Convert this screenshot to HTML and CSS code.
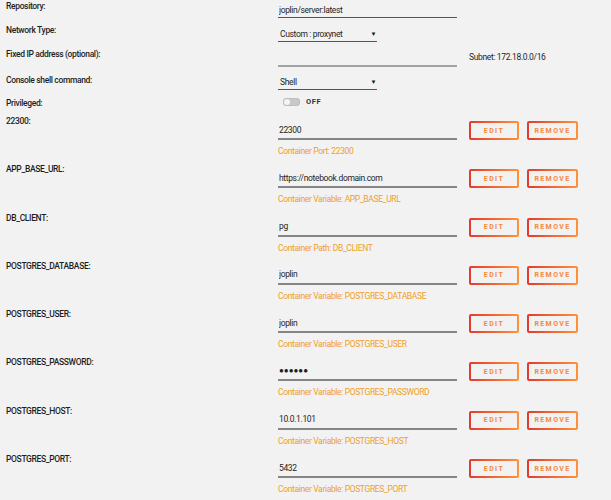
FILE: index.html
```html
<!DOCTYPE html>
<html lang="en">
<head>
  <meta charset="UTF-8">
  <meta name="viewport" content="width=device-width, initial-scale=1.0">
  <title>Edit Container</title>
  <link rel="stylesheet" href="styles.css">
</head>
<body>

  <div class="form">
    <!-- Basic settings -->
    <div class="field row-repo">
      <div class="label">Repository:</div>
      <input class="text wide" type="text" value="joplin/server:latest">
    </div>

    <div class="field row-net">
      <div class="label">Network Type:</div>
      <div class="select-wrap">
        <select class="select">
          <option>Custom : proxynet</option>
        </select>
      </div>
    </div>

    <div class="field row-ip">
      <div class="label">Fixed IP address (optional):</div>
      <input class="text wide empty" type="text" value="">
      <div class="subnet">Subnet: 172.18.0.0/16</div>
    </div>

    <div class="field row-shell">
      <div class="label">Console shell command:</div>
      <div class="select-wrap">
        <select class="select">
          <option>Shell</option>
        </select>
      </div>
    </div>

    <div class="field row-priv">
      <div class="label">Privileged:</div>
      <div class="switch">
        <span class="track"><span class="knob"></span></span>
        <span class="switch-text">OFF</span>
      </div>
    </div>

    <!-- Ports and variables -->
    <div class="config">
      <div class="label">22300:</div>
      <div class="config-body">
        <div class="config-line">
          <input class="text wide value" type="text" value="22300">
          <button class="btn">EDIT</button>
          <button class="btn">REMOVE</button>
        </div>
        <div class="hint">Container Port: 22300</div>
      </div>
    </div>

    <div class="config">
      <div class="label">APP_BASE_URL:</div>
      <div class="config-body">
        <div class="config-line">
          <input class="text wide value" type="text" value="https://notebook.domain.com">
          <button class="btn">EDIT</button>
          <button class="btn">REMOVE</button>
        </div>
        <div class="hint">Container Variable: APP_BASE_URL</div>
      </div>
    </div>

    <div class="config">
      <div class="label">DB_CLIENT:</div>
      <div class="config-body">
        <div class="config-line">
          <input class="text wide value" type="text" value="pg">
          <button class="btn">EDIT</button>
          <button class="btn">REMOVE</button>
        </div>
        <div class="hint">Container Path: DB_CLIENT</div>
      </div>
    </div>

    <div class="config">
      <div class="label">POSTGRES_DATABASE:</div>
      <div class="config-body">
        <div class="config-line">
          <input class="text wide value" type="text" value="joplin">
          <button class="btn">EDIT</button>
          <button class="btn">REMOVE</button>
        </div>
        <div class="hint">Container Variable: POSTGRES_DATABASE</div>
      </div>
    </div>

    <div class="config">
      <div class="label">POSTGRES_USER:</div>
      <div class="config-body">
        <div class="config-line">
          <input class="text wide value" type="text" value="joplin">
          <button class="btn">EDIT</button>
          <button class="btn">REMOVE</button>
        </div>
        <div class="hint">Container Variable: POSTGRES_USER</div>
      </div>
    </div>

    <div class="config">
      <div class="label">POSTGRES_PASSWORD:</div>
      <div class="config-body">
        <div class="config-line">
          <input class="text wide value secret" type="text" value="●●●●●●">
          <button class="btn">EDIT</button>
          <button class="btn">REMOVE</button>
        </div>
        <div class="hint">Container Variable: POSTGRES_PASSWORD</div>
      </div>
    </div>

    <div class="config">
      <div class="label">POSTGRES_HOST:</div>
      <div class="config-body">
        <div class="config-line">
          <input class="text wide value" type="text" value="10.0.1.101">
          <button class="btn">EDIT</button>
          <button class="btn">REMOVE</button>
        </div>
        <div class="hint">Container Variable: POSTGRES_HOST</div>
      </div>
    </div>

    <div class="config">
      <div class="label">POSTGRES_PORT:</div>
      <div class="config-body">
        <div class="config-line">
          <input class="text wide value" type="text" value="5432">
          <button class="btn">EDIT</button>
          <button class="btn">REMOVE</button>
        </div>
        <div class="hint">Container Variable: POSTGRES_PORT</div>
      </div>
    </div>
  </div>

</body>
</html>
```

FILE: styles.css
```css
body {
  font-family: Roboto, "Open Sans", Arial, sans-serif;
  font-size: 8.5px;
  letter-spacing: -0.35px;
  background-color: #f2f2f2;
  color: #2a2a2a;
  margin: 0;
  overflow: hidden;
}

.form {
  padding-left: 6px;
}

/* top rows */
.field {
  display: flex;
  align-items: flex-start;
}

.label {
  width: 272px;
  flex: none;
  line-height: 12px;
  color: #1e1e1e;
  font-weight: 500;
}

.row-repo { height: 24px; }
.row-net { height: 24px; }
.row-ip { height: 26px; }
.row-shell { height: 23px; }
.row-priv { height: 19px; }

.text {
  font-family: inherit;
  font-size: 8.5px;
  letter-spacing: -0.35px;
  color: #1e1e1e;
  background: transparent;
  border: none;
  border-bottom: 1px solid #555;
  padding: 0 0 0 1px;
  margin: 2px 0 0 0;
  height: 15px;
  box-sizing: content-box;
  outline: none;
}

.wide {
  width: 178px;
}

.empty {
  border-bottom: 2px solid #a3a3a3;
}

.subnet {
  margin: 3px 0 0 12px;
  line-height: 12px;
  color: #1e1e1e;
}

.select-wrap {
  position: relative;
  margin-top: 2px;
}

.row-shell .select-wrap {
  margin-top: 0;
}

.select-wrap::after {
  content: "\25BC";
  position: absolute;
  right: 1px;
  top: 4px;
  font-size: 6px;
  color: #111;
  pointer-events: none;
}

.select {
  appearance: none;
  -webkit-appearance: none;
  font-family: inherit;
  font-size: 8.5px;
  letter-spacing: -0.35px;
  color: #1e1e1e;
  width: 99px;
  height: 16px;
  padding: 0 0 0 2px;
  background: transparent;
  border: none;
  border-bottom: 1px solid #555;
  border-radius: 0;
  outline: none;
}

.switch {
  display: flex;
  align-items: center;
  gap: 6px;
  margin: 0 0 0 5px;
  height: 9px;
}

.track {
  width: 17px;
  height: 8px;
  border-radius: 4px;
  background-color: #c8c8c8;
  box-shadow: inset 0 0 0 1px #bdbdbd;
  position: relative;
}

.knob {
  position: absolute;
  left: 1px;
  top: 1px;
  width: 6px;
  height: 6px;
  border-radius: 3px;
  background-color: #f4f4f4;
}

.switch-text {
  font-size: 7.5px;
  font-weight: 700;
  letter-spacing: 0.6px;
  color: #333;
}

/* ports / variables */
.config {
  display: flex;
  align-items: flex-start;
  height: 48.3px;
}

.config .label {
  line-height: 10px;
}

.config-body {
  padding-top: 5px;
}

.config-line {
  display: flex;
  align-items: flex-end;
  gap: 8px;
}

.value {
  margin: 0 4px 0 0;
  height: 17px;
  border-bottom: 2px solid #858585;
}

.secret {
  font-size: 8px;
  font-weight: 700;
  letter-spacing: 0;
}

.btn {
  font-family: inherit;
  font-size: 7px;
  font-weight: 700;
  letter-spacing: 1.4px;
  color: #f4883a;
  height: 19px;
  padding: 0;
  border: 2px solid transparent;
  border-radius: 2px;
  background:
    linear-gradient(#f2f2f2, #f2f2f2) padding-box,
    linear-gradient(90deg, #e23a30, #ff9238) border-box;
  cursor: pointer;
}

.btn:first-of-type {
  width: 50px;
}

.btn:last-of-type {
  width: 51px;
}

.hint {
  margin-top: 6px;
  line-height: 10px;
  color: #f0a01e;
}
```
